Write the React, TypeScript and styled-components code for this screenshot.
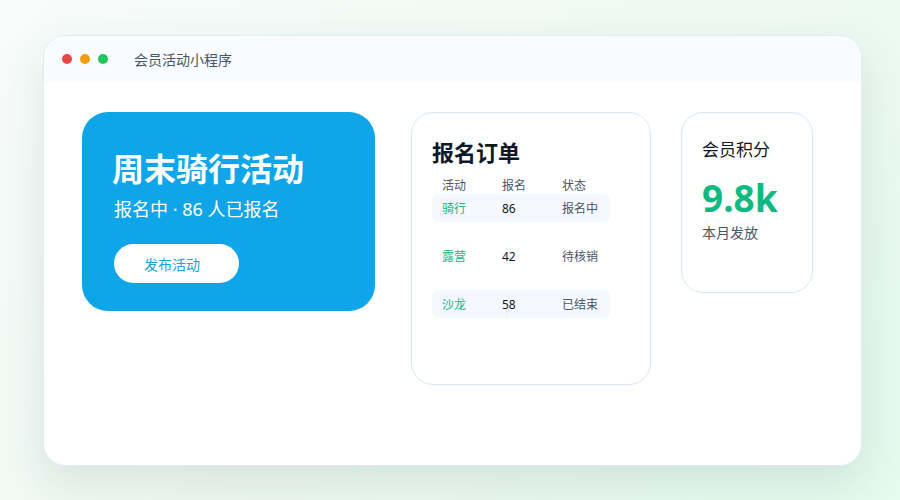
import React from 'react';
import styled, { createGlobalStyle } from 'styled-components';

const GlobalStyle = createGlobalStyle`
  html, body {
    margin: 0;
    padding: 0;
  }
  body {
    width: 900px;
    height: 500px;
    overflow: hidden;
    background: linear-gradient(135deg, #f8fcfa 0%, #eef9f3 55%, #e4fbee 100%);
    font-family: "Noto Sans", "Noto Sans CJK SC", sans-serif;
  }
`;

const Page = styled.div`
  padding: 35px 0 0 43px;
`;

const Window = styled.div`
  width: 819px;
  height: 431px;
  background: #ffffff;
  border-radius: 22px;
  border: 1px solid #e2ebf3;
  box-sizing: border-box;
  overflow: hidden;
  box-shadow: 0 18px 48px rgba(30, 64, 60, 0.12);
  display: flex;
  flex-direction: column;
`;

const TitleBar = styled.div`
  height: 46px;
  flex-shrink: 0;
  background: #f8fbff;
  display: flex;
  align-items: center;
  padding-left: 18px;
`;

const Dot = styled.span<{ $color: string }>`
  width: 10px;
  height: 10px;
  border-radius: 50%;
  background: ${(p) => p.$color};
  margin-right: 8px;
`;

const WindowTitle = styled.span`
  margin-left: 18px;
  font-size: 14px;
  color: #4b5563;
`;

const Body = styled.div`
  display: flex;
  align-items: flex-start;
  padding: 30px 0 0 38px;
`;

const Hero = styled.div`
  width: 293px;
  height: 199px;
  box-sizing: border-box;
  background: #0ea5e9;
  border-radius: 26px;
  padding: 37px 0 0 30px;
  color: #ffffff;
  display: flex;
  flex-direction: column;
  align-items: flex-start;
`;

const HeroTitle = styled.div`
  font-size: 32px;
  line-height: 40px;
  font-weight: 700;
`;

const HeroSub = styled.div`
  margin-top: 7px;
  font-size: 18px;
  line-height: 26px;
  padding-left: 2px;
`;

const PublishButton = styled.button`
  margin: 22px 0 0 2px;
  width: 125px;
  height: 39px;
  border: none;
  border-radius: 20px;
  background: #ffffff;
  color: #0ea5e9;
  font-family: inherit;
  font-size: 14px;
  text-align: left;
  padding: 0 0 0 30px;
`;

const Card = styled.div<{ $w: number; $h: number; $gap: number }>`
  width: ${(p) => p.$w}px;
  height: ${(p) => p.$h}px;
  margin-left: ${(p) => p.$gap}px;
  box-sizing: border-box;
  border: 1px solid #d9e6f2;
  border-radius: 22px;
  background: #ffffff;
`;

const OrdersInner = styled.div`
  padding: 24px 0 0 20px;
`;

const OrdersTitle = styled.div`
  font-size: 22px;
  line-height: 30px;
  font-weight: 700;
  color: #0f172a;
`;

const Table = styled.div`
  margin-top: 9px;
  width: 179px;
  display: flex;
  flex-direction: column;
`;

const Row = styled.div<{ $shaded?: boolean; $head?: boolean }>`
  display: grid;
  grid-template-columns: 60px 60px 59px;
  align-items: center;
  padding-left: 10px;
  height: ${(p) => (p.$head ? '16px' : '28px')};
  margin-bottom: ${(p) => (p.$head ? '2px' : '20px')};
  border-radius: 8px;
  background: ${(p) => (p.$shaded ? '#f5f9ff' : 'transparent')};
  font-size: 12px;
  color: ${(p) => (p.$head ? '#4b5563' : '#111827')};
`;

const Name = styled.span`
  color: #10b981;
`;

const Status = styled.span`
  color: #4b5563;
`;

const StatsInner = styled.div`
  padding: 25px 0 0 20px;
`;

const StatsLabel = styled.div`
  font-size: 17px;
  line-height: 24px;
  color: #111827;
`;

const StatsValue = styled.div`
  margin-top: 16px;
  font-size: 37px;
  line-height: 40px;
  font-weight: 700;
  color: #10b981;
`;

const StatsNote = styled.div`
  margin-top: 5px;
  font-size: 14px;
  line-height: 20px;
  color: #4b5563;
`;

const orders = [
  { name: '骑行', count: 86, status: '报名中', shaded: true },
  { name: '露营', count: 42, status: '待核销', shaded: false },
  { name: '沙龙', count: 58, status: '已结束', shaded: true },
];

export default function App() {
  return (
    <>
      <GlobalStyle />
      <Page>
        <Window>
          <TitleBar>
            <Dot $color="#ef4444" />
            <Dot $color="#f59e0b" />
            <Dot $color="#22c55e" />
            <WindowTitle>会员活动小程序</WindowTitle>
          </TitleBar>
          <Body>
            <Hero>
              <HeroTitle>周末骑行活动</HeroTitle>
              <HeroSub>报名中 · 86 人已报名</HeroSub>
              <PublishButton>发布活动</PublishButton>
            </Hero>
            <Card $w={240} $h={273} $gap={36}>
              <OrdersInner>
                <OrdersTitle>报名订单</OrdersTitle>
                <Table>
                  <Row $head>
                    <span>活动</span>
                    <span>报名</span>
                    <span>状态</span>
                  </Row>
                  {orders.map((o) => (
                    <Row key={o.name} $shaded={o.shaded}>
                      <Name>{o.name}</Name>
                      <span>{o.count}</span>
                      <Status>{o.status}</Status>
                    </Row>
                  ))}
                </Table>
              </OrdersInner>
            </Card>
            <Card $w={132} $h={181} $gap={30}>
              <StatsInner>
                <StatsLabel>会员积分</StatsLabel>
                <StatsValue>9.8k</StatsValue>
                <StatsNote>本月发放</StatsNote>
              </StatsInner>
            </Card>
          </Body>
        </Window>
      </Page>
    </>
  );
}
